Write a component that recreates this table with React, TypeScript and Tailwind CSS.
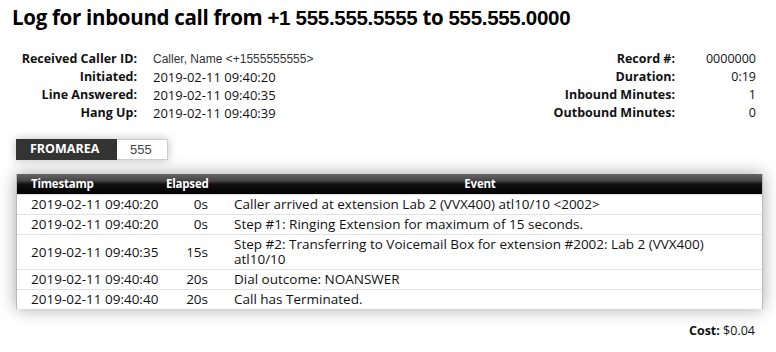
import React from "react";

const ub = { fontFamily: '"Open Sans", "Noto Sans", sans-serif' };
const ar = { fontFamily: '"Liberation Sans", Arial, sans-serif' };

const rowsL = [
  ["Received Caller ID:", "Caller, Name <+1555555555>", true],
  ["Initiated:", "2019-02-11 09:40:20", false],
  ["Line Answered:", "2019-02-11 09:40:35", false],
  ["Hang Up:", "2019-02-11 09:40:39", false],
] as const;

const rowsR = [
  ["Record #:", "0000000"],
  ["Duration:", "0:19"],
  ["Inbound Minutes:", "1"],
  ["Outbound Minutes:", "0"],
];

const events = [
  ["2019-02-11 09:40:20", "0s", "Caller arrived at extension Lab 2 (VVX400) atl10/10 <2002>"],
  ["2019-02-11 09:40:20", "0s", "Step #1: Ringing Extension for maximum of 15 seconds."],
  ["2019-02-11 09:40:35", "15s", "Step #2: Transferring to Voicemail Box for extension #2002: Lab 2 (VVX400) atl10/10"],
  ["2019-02-11 09:40:40", "20s", "Dial outcome: NOANSWER"],
  ["2019-02-11 09:40:40", "20s", "Call has Terminated."],
];

export default function App() {
  return (
    <div className="w-[776px] h-[352px] bg-white text-[#111] overflow-hidden" style={ub}>
      <h1 className="pl-[12px] pt-[3px] text-[20.5px] font-bold leading-[28px] text-black tracking-[-0.3px]">
        Log for inbound call from <span style={ar}>+1 555.555.5555</span> to <span style={ar}>555.555.0000</span>
      </h1>

      <div className="flex justify-between pt-[18px] pr-[20px]">
        <div className="grid grid-cols-[137px_auto] gap-x-[16px]">
          {rowsL.map(([l, v, arial]) => (
            <React.Fragment key={l}>
              <div className="text-right text-[12.5px] font-bold leading-[18px]">{l}</div>
              <div
                className={arial ? "text-[12px] leading-[18px] text-[#333]" : "text-[13px] leading-[18px]"}
                style={arial ? ar : undefined}
              >
                {v}
              </div>
            </React.Fragment>
          ))}
        </div>
        <div className="grid grid-cols-[auto_81px] gap-x-0">
          {rowsR.map(([l, v]) => (
            <React.Fragment key={l}>
              <div className="text-right text-[12.5px] font-bold leading-[18px]">{l}</div>
              <div className="text-right text-[12.5px] leading-[18px]">{v}</div>
            </React.Fragment>
          ))}
        </div>
      </div>

      <div className="mt-[17px] ml-[16px] flex w-[152px] h-[21px] shadow-[0_0_10px_rgba(0,0,0,0.25)]">
        <div className="w-[101px] bg-[#333] text-white text-[12.5px] font-bold flex items-center pl-[14px]">FROMAREA</div>
        <div
          className="flex-1 bg-white border border-[#ccc] border-l-0 text-[13px] text-[#444] flex items-center pl-[13px]"
          style={ar}
        >
          555
        </div>
      </div>

      <div className="mt-[14px] ml-[16px] w-[747px] bg-white border-x border-[#bbb] shadow-[0_0_16px_rgba(0,0,0,0.35)]">
        <div className="flex h-[20px] items-center text-white text-[11.5px] font-bold tracking-[-0.2px] bg-[linear-gradient(to_bottom,#666_0%,#444_35%,#111_50%,#000_100%)]">
          <div className="w-[149px] pl-[14px]">Timestamp</div>
          <div className="w-[42px] text-right">Elapsed</div>
          <div className="flex-1 text-center pr-[10px]">Event</div>
        </div>
        {events.map(([t, e, ev], i) => (
          <div key={i} className="flex items-center border-t border-[#e2e2e2] first:border-t-0 text-[13.5px] leading-[15px] py-[2px] min-h-[20px]">
            <div className="w-[149px] pl-[14px] shrink-0">{t}</div>
            <div className="w-[42px] text-right shrink-0">{e}</div>
            <div className="flex-1 pl-[26px] pr-[40px]">{ev}</div>
          </div>
        ))}
      </div>

      <div className="mt-[13px] pr-[21px] text-right text-[12.5px]">
        <span className="font-bold">Cost:</span> $0.04
      </div>
    </div>
  );
}
